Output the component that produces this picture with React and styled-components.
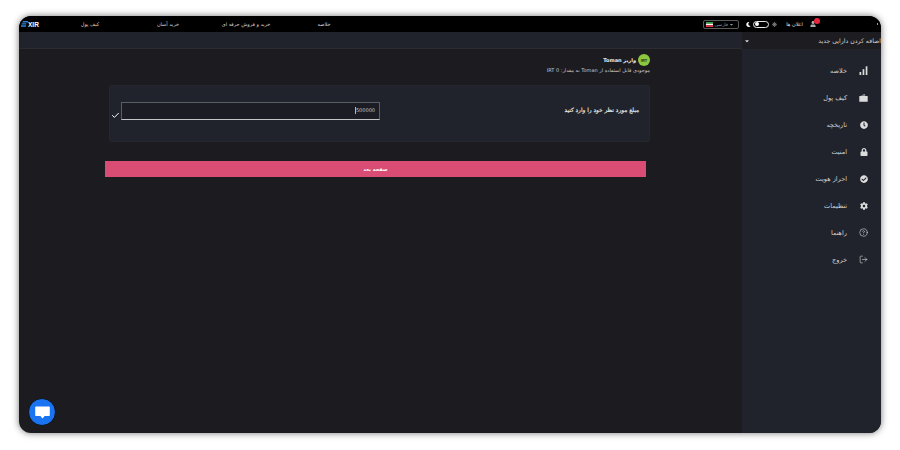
import styled, { createGlobalStyle } from "styled-components"
import { FaClock, FaLock, FaCheckCircle, FaCog, FaUser, FaCaretDown, FaMoon, FaSun } from "react-icons/fa"
import { CircleHelp, LogOut, Check } from "lucide-react"

const Global = createGlobalStyle`
    html, body {
        margin: 0;
        width: 900px;
        height: 450px;
        overflow: hidden;
        background: #fff;
        font-family: "DejaVu Sans", "Liberation Sans", sans-serif;
    }
`
const Page = styled.div`
    width: 900px;
    height: 450px;
    box-sizing: border-box;
    padding: 16px 19px 17px 19px;
`
const Ventana = styled.div`
    position: relative;
    height: 100%;
    display: flex;
    flex-direction: column;
    border-radius: 12px;
    overflow: hidden;
    background: #1b1b20;
    box-shadow: 0 0 7px rgba(0, 0, 0, 0.55);
`
const TopBar = styled.header`
    height: 16px;
    flex: none;
    display: flex;
    align-items: center;
    background: #000;
    color: #d8d8d8;
    font-size: 5px;
    padding: 0 3px 0 2px;
`
const Logo = styled.div`
    width: 30px;
    display: flex;
    align-items: center;
    font-family: "Liberation Sans", sans-serif;
    font-weight: 700;
    font-size: 6.5px;
    color: #fff;
`
const TopNav = styled.nav`
    display: grid;
    grid-template-columns: repeat(4, 78px);
    justify-items: center;
`
const TopRight = styled.div`
    margin-left: auto;
    display: flex;
    align-items: center;
`
const LangSelect = styled.div`
    width: 36px;
    height: 9px;
    box-sizing: border-box;
    border: 1px solid #5b5b5b;
    border-radius: 2px;
    display: flex;
    align-items: center;
    justify-content: space-between;
    padding: 0 4px 0 2px;
    font-size: 4.5px;
    color: #9a9a9a;
    margin-right: 7px;
`
const Switch = styled.div`
    width: 16px;
    height: 7px;
    box-sizing: border-box;
    border: 1px solid #e6e6e6;
    border-radius: 4px;
    margin: 0 3px 0 2px;
    display: flex;
    align-items: center;
    padding-left: 1px;
`
const Knob = styled.span`
    width: 4px;
    height: 4px;
    border-radius: 50%;
    background: #fff;
`
const Notif = styled.span`
    margin: 0 6px 0 9px;
    color: #e2e2e2;
`
const Campana = styled.div`
    position: relative;
    width: 8px;
    display: flex;
    justify-content: center;
    color: #a9a9a9;
    margin-right: 60px;
`
const Badge = styled.span`
    position: absolute;
    top: -3px;
    right: -3px;
    width: 6px;
    height: 6px;
    border-radius: 50%;
    background: #e8273e;
`
const Punto = styled.span`
    width: 1px;
    height: 2px;
    background: #9a9a9a;
`
const Cuerpo = styled.div`
    flex: 1;
    min-height: 0;
    display: flex;
`
const Principal = styled.main`
    flex: 1;
    min-width: 0;
    display: flex;
    flex-direction: column;
`
const SubBar = styled.div`
    height: 16px;
    flex: none;
    background: #20232c;
    border-bottom: 1px solid #2b2b30;
`
const Contenido = styled.div`
    padding: 5px 92px 0 86px;
    display: flex;
    flex-direction: column;
`
const Encabezado = styled.div`
    align-self: flex-end;
    direction: rtl;
`
const Titulo = styled.div`
    display: flex;
    align-items: center;
    gap: 2px;
    font-size: 5px;
    font-weight: 700;
    color: #eee;
`
const Moneda = styled.span`
    width: 12px;
    height: 12px;
    border-radius: 50%;
    background: #8cc63f;
    color: #1d2a10;
    font-size: 4px;
    font-weight: 700;
    font-family: "Liberation Sans", sans-serif;
    display: flex;
    align-items: center;
    justify-content: center;
`
const Subtitulo = styled.div`
    font-size: 5px;
    color: #c9c9c9;
    margin-top: 1px;
`
const Tarjeta = styled.section`
    margin: 12px 0 0 4px;
    height: 57px;
    box-sizing: border-box;
    background: #20232c;
    border-radius: 2px;
    border: 1px solid #25272f;
    display: flex;
    align-items: center;
    justify-content: space-between;
    padding: 0 10px 6px 1px;
`
const CampoFila = styled.div`
    display: flex;
    align-items: flex-end;
    gap: 1px;
    color: #fff;
`
const Campo = styled.div`
    width: 259px;
    height: 18px;
    box-sizing: border-box;
    border: 1px solid #5a5d64;
    border-bottom-color: #c4c4c4;
    background: #1b1c24;
    font-size: 5px;
    color: #c9c9c9;
    display: flex;
    align-items: center;
    justify-content: flex-end;
    padding-right: 4px;
`
const Valor = styled.span`
    border-left: 1px solid #b8b8b8;
    line-height: 7px;
`
const Etiqueta = styled.label`
    direction: rtl;
    font-size: 5.8px;
    color: #efefef;
    -webkit-text-stroke: 0.15px #efefef;
    margin-bottom: 2px;
`
const Boton = styled.button`
    margin: 19px 4px 0 0;
    height: 16px;
    border: 0;
    padding: 0;
    background: #d94c73;
    color: #fff;
    font-family: inherit;
    font-size: 5px;
    font-weight: 700;
`
const Lateral = styled.aside`
    width: 139px;
    flex: none;
    background: #20232c;
    display: flex;
    flex-direction: column;
`
const LateralTop = styled.div`
    height: 17px;
    flex: none;
    background: #1c1c21;
    display: flex;
    align-items: center;
    justify-content: space-between;
    padding-left: 2px;
    color: #d5d5d5;
    font-size: 6.2px;
    overflow: hidden;
`
const Menu = styled.nav`
    display: flex;
    flex-direction: column;
    padding-top: 8px;
`
const MenuItem = styled.a`
    height: 27px;
    display: flex;
    align-items: center;
    justify-content: flex-end;
    gap: 12px;
    padding-right: 13px;
    font-size: 6.5px;
    color: #d2d2d2;
`
const MenuTexto = styled.span`
    direction: rtl;
`
const IconoCaja = styled.span`
    width: 9px;
    display: flex;
    justify-content: center;
    color: #dcdcdc;
`
const Chat = styled.button`
    position: absolute;
    left: 9px;
    bottom: 7px;
    width: 28px;
    height: 28px;
    padding: 0;
    border: 1px solid #111;
    border-radius: 50%;
    background: #1a73f0;
    display: flex;
    align-items: center;
    justify-content: center;
`

const Barras = () => (
    <svg width="9" height="9" viewBox="0 0 9 9" fill="currentColor">
        <rect x="0.5" y="6" width="1.7" height="3" />
        <rect x="3.6" y="3.2" width="1.7" height="5.8" />
        <rect x="6.7" y="0.3" width="1.7" height="8.7" />
    </svg>
)
const Cartera = () => (
    <svg width="9" height="8" viewBox="0 0 9 8" fill="currentColor">
        <path d="M1.5 1.6 5.5.2l1 1.4z" />
        <rect x="0.3" y="2" width="8.4" height="5.8" rx="0.4" />
    </svg>
)
const Bandera = () => (
    <svg width="7" height="5" viewBox="0 0 7 5">
        <rect width="7" height="1.7" fill="#2f9e44" />
        <rect y="1.7" width="7" height="1.6" fill="#fff" />
        <rect y="3.3" width="7" height="1.7" fill="#e0313e" />
    </svg>
)
const MarcaLogo = () => (
    <svg width="7" height="6" viewBox="0 0 7 6" fill="#2f7fd6">
        <path d="M2 0h5v1.500H1.400zM.8 2.200h4.400v1.400H.4zM0 4.300h5v1.500H0z" />
    </svg>
)
const Burbuja = () => (
    <svg width="15" height="13" viewBox="0 0 15 13" fill="#fff">
        <path d="M1 .5h13a.8.8 0 0 1 .8.8v8a.8.8 0 0 1-.8.8H9.600L7.500 12.600 5.400 10.100H1a.8.8 0 0 1-.8-.8v-8A.8.8 0 0 1 1 .5z" />
    </svg>
)

const items = [
    { texto: "خلاصه", icono: <Barras /> },
    { texto: "کیف پول", icono: <Cartera /> },
    { texto: "تاریخچه", icono: <FaClock size={8} /> },
    { texto: "امنیت", icono: <FaLock size={8} /> },
    { texto: "احراز هویت", icono: <FaCheckCircle size={8} /> },
    { texto: "تنظیمات", icono: <FaCog size={8} /> },
    { texto: "راهنما", icono: <CircleHelp size={9} strokeWidth={1.6} /> },
    { texto: "خروج", icono: <LogOut size={9} strokeWidth={1.6} /> },
]

const App = () => {
    return <Page>
        <Global />
        <Ventana>
            <TopBar>
                <Logo><MarcaLogo />XIR</Logo>
                <TopNav>
                    <span>کیف پول</span>
                    <span>خرید آسان</span>
                    <span>خرید و فروش حرفه ای</span>
                    <span>خلاصه</span>
                </TopNav>
                <TopRight>
                    <LangSelect>
                        <Bandera />
                        <span>فارسی</span>
                        <FaCaretDown size={5} />
                    </LangSelect>
                    <FaMoon size={5} color="#fff" />
                    <Switch><Knob /></Switch>
                    <FaSun size={5} color="#8a8a8a" />
                    <Notif>اعلان ها</Notif>
                    <Campana><FaUser size={6} /><Badge /></Campana>
                    <Punto />
                </TopRight>
            </TopBar>
            <Cuerpo>
                <Principal>
                    <SubBar />
                    <Contenido>
                        <Encabezado>
                            <Titulo><Moneda>IRT</Moneda>واریز Toman</Titulo>
                            <Subtitulo>موجودی قابل استفاده از Toman به مقدار: 0 IRT</Subtitulo>
                        </Encabezado>
                        <Tarjeta>
                            <CampoFila>
                                <Check size={9} strokeWidth={2.6} />
                                <Campo><Valor>500000</Valor></Campo>
                            </CampoFila>
                            <Etiqueta>مبلغ مورد نظر خود را وارد کنید</Etiqueta>
                        </Tarjeta>
                        <Boton>صفحه بعد</Boton>
                    </Contenido>
                </Principal>
                <Lateral>
                    <LateralTop>
                        <FaCaretDown size={6} />
                        <span dir="rtl">اضافه کردن دارایی جدید</span>
                    </LateralTop>
                    <Menu>
                        {items.map((item) => (
                            <MenuItem key={item.texto}>
                                <MenuTexto>{item.texto}</MenuTexto>
                                <IconoCaja>{item.icono}</IconoCaja>
                            </MenuItem>
                        ))}
                    </Menu>
                </Lateral>
            </Cuerpo>
            <Chat><Burbuja /></Chat>
        </Ventana>
    </Page>
}

export default App
